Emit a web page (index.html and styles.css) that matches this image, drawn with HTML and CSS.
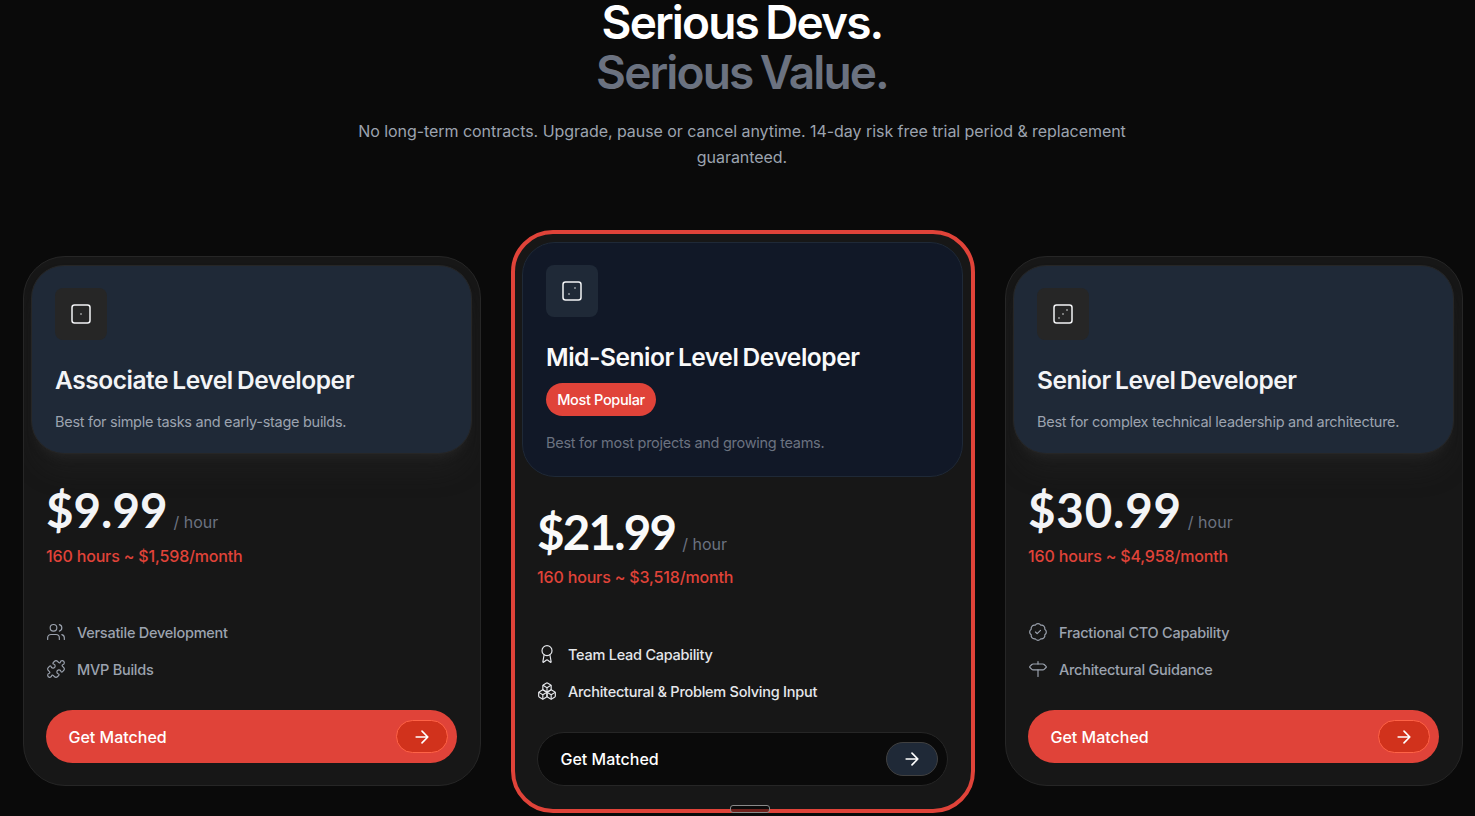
FILE: index.html
```html
<!DOCTYPE html>
<html lang="en">

<head>
    <meta charset="UTF-8" />
    <title>Pricing</title>
    <link rel="stylesheet" href="styles.css">
</head>

<body>
    <header class="intro">
        <h1>Serious Devs.<br><span>Serious Value.</span></h1>
        <p>No long-term contracts. Upgrade, pause or cancel anytime. 14-day risk free trial period &amp; replacement guaranteed.</p>
    </header>

    <main class="plans">
        <section class="card">
            <div class="card-head">
                <div class="icon-box">
                    <svg class="icon" viewBox="0 0 24 24"><rect x="3" y="3" width="18" height="18" rx="2.5" /><path d="M12 12h.01" /></svg>
                </div>
                <h2>Associate Level Developer</h2>
                <p class="desc">Best for simple tasks and early-stage builds.</p>
            </div>
            <div class="card-body">
                <div class="price"><strong>$9.99</strong><span>/ hour</span></div>
                <p class="monthly">160 hours ~ $1,598/month</p>
                <ul>
                    <li>
                        <svg class="icon" viewBox="0 0 24 24"><path d="M16 21v-2a4 4 0 0 0-4-4H6a4 4 0 0 0-4 4v2" /><circle cx="9" cy="7" r="4" /><path d="M22 21v-2a4 4 0 0 0-3-3.87M16 3.13a4 4 0 0 1 0 7.75" /></svg>
                        <span>Versatile Development</span>
                    </li>
                    <li>
                        <svg class="icon" viewBox="0 0 24 24"><path d="M15.39 4.39a1 1 0 0 0 1.68-.474 2.5 2.5 0 1 1 3.014 3.015 1 1 0 0 0-.474 1.68l1.683 1.682a2.414 2.414 0 0 1 0 3.414L19.61 15.39a1 1 0 0 1-1.68-.474 2.5 2.5 0 1 0-3.014 3.015 1 1 0 0 1 .474 1.68l-1.683 1.682a2.414 2.414 0 0 1-3.414 0L8.61 19.61a1 1 0 0 0-1.68.474 2.5 2.5 0 1 1-3.014-3.015 1 1 0 0 0 .474-1.68l-1.683-1.682a2.414 2.414 0 0 1 0-3.414L4.39 8.61a1 1 0 0 1 1.68.474 2.5 2.5 0 1 0 3.014-3.015 1 1 0 0 1-.474-1.68l1.683-1.682a2.414 2.414 0 0 1 3.414 0z" /></svg>
                        <span>MVP Builds</span>
                    </li>
                </ul>
                <button class="btn">
                    <span>Get Matched</span>
                    <i class="arrow"><svg class="icon" viewBox="0 0 24 24"><path d="M5 12h14M12 5l7 7-7 7" /></svg></i>
                </button>
            </div>
        </section>

        <section class="card featured">
            <div class="card-head">
                <div class="icon-box">
                    <svg class="icon" viewBox="0 0 24 24"><rect x="3" y="3" width="18" height="18" rx="2.5" /><path d="M15 9h.01M9 15h.01" /></svg>
                </div>
                <h2>Mid-Senior Level Developer</h2>
                <span class="badge">Most Popular</span>
                <p class="desc">Best for most projects and growing teams.</p>
            </div>
            <div class="card-body">
                <div class="price"><strong>$21.99</strong><span>/ hour</span></div>
                <p class="monthly">160 hours ~ $3,518/month</p>
                <ul>
                    <li>
                        <svg class="icon" viewBox="0 0 24 24"><path d="m15.477 12.89 1.515 8.526a.5.5 0 0 1-.81.47l-3.58-2.687a1 1 0 0 0-1.197 0l-3.586 2.686a.5.5 0 0 1-.81-.469l1.514-8.526" /><circle cx="12" cy="8" r="6" /></svg>
                        <span>Team Lead Capability</span>
                    </li>
                    <li>
                        <svg class="icon" viewBox="0 0 24 24"><path d="M2.97 12.92A2 2 0 0 0 2 14.63v3.24a2 2 0 0 0 .97 1.71l3 1.8a2 2 0 0 0 2.06 0L12 19v-5.5l-5-3-4.03 2.42Z" /><path d="m7 16.5-4.74-2.85M7 16.5l5-3M7 16.5v5.17" /><path d="M12 13.5V19l3.97 2.38a2 2 0 0 0 2.06 0l3-1.8a2 2 0 0 0 .97-1.71v-3.24a2 2 0 0 0-.97-1.71L17 10.5l-5 3Z" /><path d="m17 16.5-5-3M17 16.5l4.74-2.85M17 16.5v5.17" /><path d="M7.97 4.42A2 2 0 0 0 7 6.13v4.37l5 3 5-3V6.13a2 2 0 0 0-.97-1.71l-3-1.8a2 2 0 0 0-2.06 0l-3 1.8Z" /><path d="M12 8 7.26 5.15M12 8l4.74-2.85M12 13.5V8" /></svg>
                        <span>Architectural &amp; Problem Solving Input</span>
                    </li>
                </ul>
                <button class="btn">
                    <span>Get Matched</span>
                    <i class="arrow"><svg class="icon" viewBox="0 0 24 24"><path d="M5 12h14M12 5l7 7-7 7" /></svg></i>
                </button>
            </div>
        </section>

        <section class="card">
            <div class="card-head">
                <div class="icon-box">
                    <svg class="icon" viewBox="0 0 24 24"><rect x="3" y="3" width="18" height="18" rx="2.5" /><path d="M16 8h.01M12 12h.01M8 16h.01" /></svg>
                </div>
                <h2>Senior Level Developer</h2>
                <p class="desc">Best for complex technical leadership and architecture.</p>
            </div>
            <div class="card-body">
                <div class="price price-wide"><strong>$30.99</strong><span>/ hour</span></div>
                <p class="monthly">160 hours ~ $4,958/month</p>
                <ul>
                    <li>
                        <svg class="icon" viewBox="0 0 24 24"><path d="M3.85 8.62a4 4 0 0 1 4.78-4.77 4 4 0 0 1 6.74 0 4 4 0 0 1 4.78 4.78 4 4 0 0 1 0 6.74 4 4 0 0 1-4.77 4.78 4 4 0 0 1-6.75 0 4 4 0 0 1-4.78-4.77 4 4 0 0 1 0-6.76Z" /><path d="m9 12 2 2 4-4" /></svg>
                        <span>Fractional CTO Capability</span>
                    </li>
                    <li>
                        <svg class="icon" viewBox="0 0 24 24"><path d="M12 13v8M12 3v3" /><path d="M18 6a2 2 0 0 1 1.387.56l2.307 2.22a1 1 0 0 1 0 1.44l-2.307 2.22A2 2 0 0 1 18 13H6a2 2 0 0 1-1.387-.56l-2.306-2.22a1 1 0 0 1 0-1.44l2.306-2.22A2 2 0 0 1 6 6z" /></svg>
                        <span>Architectural Guidance</span>
                    </li>
                </ul>
                <button class="btn">
                    <span>Get Matched</span>
                    <i class="arrow"><svg class="icon" viewBox="0 0 24 24"><path d="M5 12h14M12 5l7 7-7 7" /></svg></i>
                </button>
            </div>
        </section>
    </main>

    <div class="handle"></div>
</body>

</html>
```
FILE: styles.css
```css
* {
    box-sizing: border-box;
    margin: 0;
    padding: 0;
}

body {
    height: 816px;
    overflow: hidden;
    font-family: Inter, 'Liberation Sans', sans-serif;
    font-size: 16px;
    background-color: #0a0a0a;
    color: #f3f4f6;
    display: flow-root;
}

.intro {
    width: 800px;
    margin: -3px 332px 60px 342px;
    text-align: center;
}

h1 {
    font-size: 46px;
    line-height: 50px;
    font-weight: 600;
    letter-spacing: -1.85px;
    word-spacing: -2.5px;
    color: #ffffff;
}

h1 span {
    color: #6b7280;
}

.intro p {
    margin-top: 21px;
    line-height: 26px;
    letter-spacing: -0.05px;
    color: #9ca3af;
}

.plans {
    display: grid;
    grid-template-columns: repeat(3, 458px);
    gap: 33px;
    align-items: start;
    padding-left: 23px;
}

.card {
    margin-top: 26px;
    padding: 8px 8px 0 7px;
    background-color: #171717;
    border: 1px solid #262626;
    border-radius: 42px;
    overflow: hidden;
}

.card-head {
    height: 189px;
    padding: 22px 23px;
    background-color: #1f2937;
    border: 1px solid #262626;
    border-radius: 33px;
    box-shadow: 0 21px 26px -5px rgba(38, 38, 38, 0.4), 0 8px 10px -6px #262626;
}

.icon {
    width: 20px;
    height: 20px;
    flex: none;
    fill: none;
    stroke: currentColor;
    stroke-width: 1.4;
    stroke-linecap: round;
    stroke-linejoin: round;
}

.icon-box {
    display: flex;
    align-items: center;
    justify-content: center;
    width: 52px;
    height: 52px;
    border-radius: 8px;
    background-color: #262626;
}

.icon-box .icon {
    width: 24px;
    height: 24px;
    stroke-width: 1.5;
}

h2 {
    margin-top: 23px;
    font-size: 24.5px;
    line-height: 34px;
    font-weight: 600;
    letter-spacing: -0.45px;
    word-spacing: -1.5px;
    white-space: nowrap;
}

.desc {
    margin-top: 13px;
    font-size: 14.5px;
    line-height: 24px;
    letter-spacing: -0.28px;
    color: #9ca3af;
}

.card-body {
    padding: 31px 15px 22px;
}

.price {
    display: flex;
    align-items: baseline;
    gap: 6px;
    height: 50px;
    line-height: 50px;
}

.price strong {
    font-family: Lato, Inter, sans-serif;
    font-size: 47.5px;
    font-weight: 700;
}

.price-wide strong {
    letter-spacing: 0.8px;
}

.price span {
    color: #6b7280;
}

.monthly {
    margin-top: 8px;
    line-height: 26px;
    font-weight: 500;
    letter-spacing: -0.16px;
    color: #e04339;
}

ul {
    display: flex;
    flex-direction: column;
    gap: 17px;
    margin-top: 53px;
    list-style: none;
}

li {
    display: flex;
    align-items: center;
    gap: 11px;
    height: 20px;
    font-size: 14.5px;
    font-weight: 500;
    letter-spacing: -0.25px;
    color: #9ca3af;
}

.btn {
    display: flex;
    align-items: center;
    justify-content: space-between;
    width: 100%;
    height: 53px;
    margin-top: 31px;
    padding: 0 9px 0 22.5px;
    border: none;
    border-radius: 27px;
    background-color: #e04339;
    color: #ffffff;
    font-family: inherit;
    font-size: 16px;
    font-weight: 500;
}

.arrow {
    display: flex;
    align-items: center;
    justify-content: center;
    width: 52px;
    height: 33px;
    border: 1px solid #ff6347;
    border-radius: 17px;
    background-color: #d1321c;
}

.arrow .icon {
    stroke-width: 2;
}

.featured {
    margin: 0 -3px;
    border: 4px solid #e04339;
}

.featured .card-head {
    height: 235px;
    background-color: #111827;
    border-color: #1f2937;
    box-shadow: none;
}

.featured .icon-box {
    background-color: #1f2937;
}

.featured h2,
.featured .price {
    color: #fafafa;
}

.featured .price {
    gap: 7px;
}

.featured .price strong {
    letter-spacing: -1.8px;
}

.badge {
    display: block;
    width: 110px;
    height: 33px;
    margin-top: 9px;
    border-radius: 17px;
    background-color: #e04339;
    color: #ffffff;
    font-size: 14.5px;
    font-weight: 500;
    line-height: 33px;
    letter-spacing: -0.35px;
    text-align: center;
}

.featured .desc {
    margin-top: 15px;
    color: #6b7280;
}

.featured .card-body {
    padding-top: 30px;
    padding-bottom: 23px;
}

.featured .monthly {
    margin-top: 7px;
}

.featured ul {
    margin-top: 54px;
}

.featured li {
    color: #e5e7eb;
}

.featured .btn {
    height: 54px;
    background-color: #0a0a0a;
    border: 1px solid #262626;
}

.featured .arrow {
    height: 34px;
    background-color: #1f2937;
    border-color: #404040;
}

/* drag handle over the bottom edge */
.handle {
    position: fixed;
    left: 730px;
    bottom: 3px;
    width: 40px;
    height: 8px;
    border: 1px solid #8a8a8a;
    border-radius: 3px;
    background-color: rgba(0, 0, 0, 0.5);
}
```
